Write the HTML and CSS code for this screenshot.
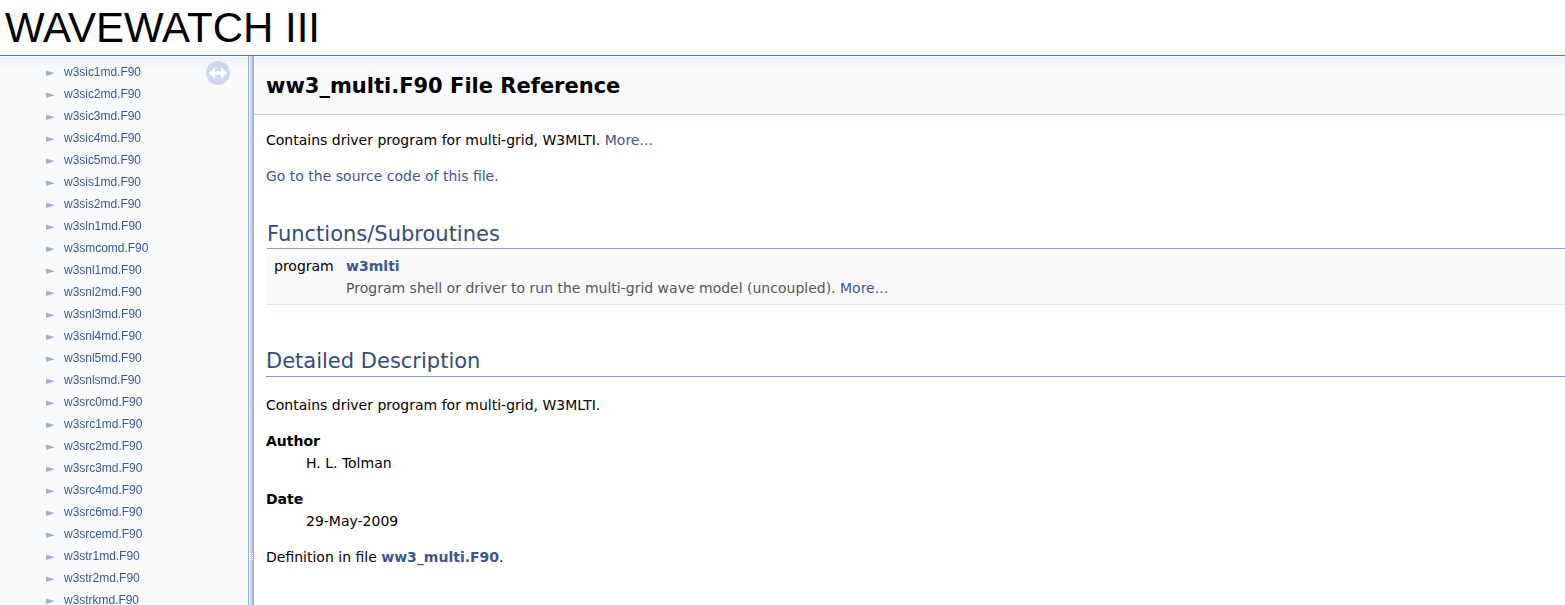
FILE: index.html
```html
<!DOCTYPE html>
<html lang="en">
<head>
<meta charset="utf-8">
<title>WAVEWATCH III: ww3_multi.F90 File Reference</title>
<link rel="stylesheet" href="styles.css">
</head>
<body>
<header class="project">WAVEWATCH III</header>
<div class="layout">
<nav class="side">
<svg class="sync" width="24" height="24" viewBox="0 0 24 24"><circle cx="12" cy="12" r="12" fill="#cfd8ea"/><path d="M2.8 12 9 6.3v3.9h6V6.3l6.2 5.7L15 17.7v-3.9H9v3.9z" fill="#fff"/></svg>
<ul class="tree">
<li><span class="arrow">►</span><a>w3sic1md.F90</a></li>
<li><span class="arrow">►</span><a>w3sic2md.F90</a></li>
<li><span class="arrow">►</span><a>w3sic3md.F90</a></li>
<li><span class="arrow">►</span><a>w3sic4md.F90</a></li>
<li><span class="arrow">►</span><a>w3sic5md.F90</a></li>
<li><span class="arrow">►</span><a>w3sis1md.F90</a></li>
<li><span class="arrow">►</span><a>w3sis2md.F90</a></li>
<li><span class="arrow">►</span><a>w3sln1md.F90</a></li>
<li><span class="arrow">►</span><a>w3smcomd.F90</a></li>
<li><span class="arrow">►</span><a>w3snl1md.F90</a></li>
<li><span class="arrow">►</span><a>w3snl2md.F90</a></li>
<li><span class="arrow">►</span><a>w3snl3md.F90</a></li>
<li><span class="arrow">►</span><a>w3snl4md.F90</a></li>
<li><span class="arrow">►</span><a>w3snl5md.F90</a></li>
<li><span class="arrow">►</span><a>w3snlsmd.F90</a></li>
<li><span class="arrow">►</span><a>w3src0md.F90</a></li>
<li><span class="arrow">►</span><a>w3src1md.F90</a></li>
<li><span class="arrow">►</span><a>w3src2md.F90</a></li>
<li><span class="arrow">►</span><a>w3src3md.F90</a></li>
<li><span class="arrow">►</span><a>w3src4md.F90</a></li>
<li><span class="arrow">►</span><a>w3src6md.F90</a></li>
<li><span class="arrow">►</span><a>w3srcemd.F90</a></li>
<li><span class="arrow">►</span><a>w3str1md.F90</a></li>
<li><span class="arrow">►</span><a>w3str2md.F90</a></li>
<li><span class="arrow">►</span><a>w3strkmd.F90</a></li>
</ul>
</nav>
<div class="splitter"><svg class="grip" width="4" height="8" viewBox="0 0 4 8" shape-rendering="crispEdges"><path d="M0 0h1v1H0zM2 0h1v1H2zM0 2h1v1H0zM2 2h1v1H2zM0 4h1v1H0zM2 4h1v1H2zM0 6h1v1H0zM2 6h1v1H2z" fill="#fff"/></svg></div>
<main class="doc">
<div class="header"><h1>ww3_multi.F90 File Reference</h1></div>
<div class="contents">
<p>Contains driver program for multi-grid, W3MLTI. <a>More...</a></p>
<p><a>Go to the source code of this file.</a></p>
<h2 class="members-title">Functions/Subroutines</h2>
<div class="member">
<div class="kind">program</div>
<div><a class="strong">w3mlti</a><div class="brief">Program shell or driver to run the multi-grid wave model (uncoupled). <a>More...</a></div></div>
</div>
<h2 class="details-title">Detailed Description</h2>
<p>Contains driver program for multi-grid, W3MLTI.</p>
<dl><dt>Author</dt><dd>H. L. Tolman</dd></dl>
<dl><dt>Date</dt><dd>29-May-2009</dd></dl>
<p>Definition in file <a class="strong">ww3_multi.F90</a>.</p>
</div>
</main>
</div>
</body>
</html>
```
FILE: styles.css
```css
* { box-sizing: border-box; }
body {
  margin: 0;
  height: 605px;
  overflow: hidden;
  background: #fff;
  color: #000;
  font: 14px/22px "DejaVu Sans", sans-serif;
}
a { color: #3d578c; }
.strong { font-weight: bold; }
.project {
  height: 56px;
  padding: 3px 5px 0;
  border-bottom: 1px solid #5373b4;
  font: 42px/49px "Liberation Sans", Arial, sans-serif;
}
.layout { display: flex; height: 549px; }
.side, .header {
  background: #f9fafc linear-gradient(#fff 0, #fff 1px, #eef1f7 1px, #f9fafc 12px) no-repeat;
}
.side {
  position: relative;
  width: 248px;
  overflow: hidden;
  will-change: transform;
}
.sync { position: absolute; top: 5px; left: 206px; }
.tree { margin: 0; padding: 5px 0 0 46px; list-style: none; }
.tree li {
  display: flex;
  height: 22px;
  font: 12px/22px "Liberation Sans", Arial, sans-serif;
  letter-spacing: -0.03px;
}
.arrow { width: 18px; color: #9cafd4; font: 11px/24px "DejaVu Sans", sans-serif; }
.splitter {
  position: relative;
  width: 6px;
  background: linear-gradient(90deg, #9cafd4 1px, #f0f3f9 1px, #f0f3f9 2px, #dce4f2 2px, #dce4f2 3px, #c4cfe5 3px, #c4cfe5 4px, #a9b8d9 4px);
}
.grip { position: absolute; left: 2px; top: 497px; }
.doc { flex: 1; min-width: 0; }
.header { height: 59px; padding: 18px 12px 0; border-bottom: 1px solid #c4cfe5; }
h1 { margin: 0; font-size: 21px; line-height: 25px; }
.contents { padding: 14px 0 0 12px; }
p { margin: 0 0 14px; }
h2 {
  margin: 0;
  border-bottom: 1px solid #879ecb;
  color: #354c7b;
  font-weight: normal;
  font-size: 21px;
  line-height: 27px;
}
.members-title { height: 28px; margin: 34px 0 5px 1px; }
.member {
  display: flex;
  height: 51px;
  padding: 1px 8px 0;
  background: #f9fafc;
  border-bottom: 1px solid #dee4f0;
}
.kind { width: 72.1px; }
.brief { color: #555; }
.details-title { height: 29px; margin: 43px 0 17px; }
dl { margin: 0 0 14px; }
dt { font-weight: bold; }
dd { margin: 0 0 0 40px; }
```
